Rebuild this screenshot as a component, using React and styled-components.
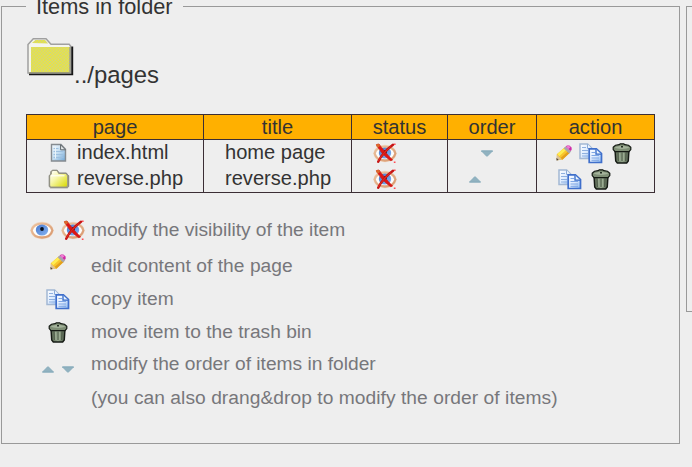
import React from "react";
import styled, { createGlobalStyle } from "styled-components";

const GlobalStyle = createGlobalStyle`
  * { box-sizing: border-box; }
  body {
    margin: 0;
    background: #eeeeee;
    overflow: hidden;
    color: #333333;
    font-family: "Liberation Sans", Arial, sans-serif;
  }
`;

const Page = styled.main`
  display: flex;
  align-items: flex-start;
  gap: 6px;
  width: 692px;
  height: 467px;
  padding-left: 1px;
  overflow: hidden;
`;

const Panel = styled.fieldset`
  flex: none;
  width: 679px;
  height: 450px;
  margin: -6px 0 0;
  padding: 0 24px;
  border: 1px solid #999999;
`;

const Legend = styled.legend`
  height: 25px;
  padding: 0 10px;
  font-size: 21.75px;
  line-height: 25px;
  white-space: nowrap;
`;

const SidePanel = styled.aside`
  flex: none;
  width: 60px;
  height: 306px;
  margin-top: 6px;
  border: 1px solid #999999;
`;

const Location = styled.div`
  display: flex;
  align-items: flex-start;
  height: 95px;
  padding-top: 18px;
`;

const Path = styled.span`
  margin-top: 24px;
  font-size: 23.9px;
  line-height: 28px;
`;

const ItemTable = styled.table`
  width: 629px;
  table-layout: fixed;
  border-collapse: separate;
  border-spacing: 0;
  border: 1px solid #3b2e35;
  border-right: 0;
  border-bottom: 0;
  font-size: 20.1px;
  line-height: 24px;
`;

const Col = styled.col`
  width: ${(p) => p.$width}px;
`;

const HeadCell = styled.th`
  height: 25px;
  padding: 0;
  border-right: 1px solid #3b2e35;
  border-bottom: 1px solid #3b2e35;
  background: #ffb000;
  font-weight: 400;
  text-align: center;
`;

const Cell = styled.td`
  height: ${(p) => (p.$last ? 27 : 26)}px;
  padding: 0 0 0 ${(p) => p.$indent || 0}px;
  border-right: 1px solid #3b2e35;
  border-bottom: ${(p) => (p.$last ? "1px solid #3b2e35" : "0")};
`;

const CellContent = styled.div`
  display: flex;
  align-items: center;
  gap: ${(p) => p.$gap || 0}px;
  height: 26px;
  white-space: nowrap;
`;

const CellText = styled.span`
  margin-top: -3px;
`;

const IconGroup = styled.span`
  display: flex;
  align-items: center;
  gap: 9px;
`;

const Help = styled.ul`
  margin: 21px 0 0;
  padding: 0;
  list-style: none;
  color: #77777b;
  font-size: 19.2px;
  line-height: 32px;
`;

const HelpRow = styled.li`
  display: flex;
  align-items: flex-start;
  height: ${(p) => p.$height}px;
  letter-spacing: ${(p) => p.$tracking || 0}px;
  white-space: nowrap;
`;

const HelpIcons = styled.span`
  display: flex;
  flex: none;
  align-items: center;
  justify-content: center;
  gap: ${(p) => p.$gap || 0}px;
  width: 65px;
  height: 32px;
  padding: ${(p) => p.$pad || "0"};
`;

const Svg = styled.svg`
  display: block;
  flex: none;
`;

const BigFolder = () => (
  <Svg width="48" height="40" viewBox="0 0 48 40">
    <defs>
      <pattern id="dither" width="3" height="3" patternUnits="userSpaceOnUse">
        <rect width="3" height="3" fill="#eaea38" />
        <rect width="1.5" height="1.5" fill="#d2d084" />
        <rect x="1.5" y="1.5" width="1.5" height="1.5" fill="#d2d084" />
      </pattern>
    </defs>
    <path d="M3 37h43V9.5" fill="none" stroke="#161616" strokeWidth="2.4" />
    <path d="M2 36V7.5L7.3 1.7h12.7l5 5.6h18.2L44.6 9v27H2z" fill="#f5f5ee" stroke="#a0a0a0" strokeWidth="1.5" />
    <path d="M6 6l3.4-3h9.7l3.1 3.5zM5 10h38.4v25H5z" fill="url(#dither)" />
    <path d="M3.4 35.6h40.4V10" fill="none" stroke="#9a9a70" />
  </Svg>
);

const PageIcon = () => (
  <Svg width="18" height="20" viewBox="0 0 18 20">
    <defs>
      <linearGradient id="sheet" x2="1" y2="1">
        <stop stopColor="#f4f9fd" />
        <stop offset=".5" stopColor="#c2ddf1" />
        <stop offset="1" stopColor="#71a6d5" />
      </linearGradient>
    </defs>
    <path d="M1.5 1.5h9.5l4.5 4.8v11.7h-14z" fill="url(#sheet)" stroke="#858b90" strokeWidth="1.4" />
    <path d="M10.6 1.8v5h4.8z" fill="#e6ebed" stroke="#62676b" />
    <path d="M3.5 5.5h5M3.5 8.5h10M3.5 11.5h10M3.5 14.5h10" stroke="#9dc0e0" />
    <path d="M5.5 3.5v12" stroke="#e9f4fa" />
  </Svg>
);

const FolderIcon = () => (
  <Svg width="22" height="20" viewBox="0 0 22 20">
    <defs>
      <linearGradient id="folder" x2="1" y2="1">
        <stop stopColor="#ffffff" />
        <stop offset=".4" stopColor="#f7f7ac" />
        <stop offset="1" stopColor="#d9da05" />
      </linearGradient>
    </defs>
    <path d="M1.2 17.5V6.5L2.8 5V2.7l1.5-1.5h4.9l2 2.8h7.2l1.2 1.8 1.1.8v11l-1.3 1.2H2.5z" fill="#a09e85" stroke="#85857a" />
    <path d="M2.2 6.8l1.7-1.7V2.8l1-.8h3.8l1.9 3h7.2l1.2 1.8v9.8l-.8.8H3l-.8-.9z" fill="url(#folder)" />
    <path d="M2.8 6.8h13.7" stroke="#fff" />
  </Svg>
);

const EyeIcon = ({ crossed }) => (
  <Svg width="24" height="21" viewBox="0 0 24 21">
    <defs>
      <linearGradient id="lid" y2="1">
        <stop stopColor="#ecc3a0" />
        <stop offset="1" stopColor="#d8986e" />
      </linearGradient>
      <linearGradient id="iris" y2="1">
        <stop stopColor="#4677cd" />
        <stop offset="1" stopColor="#86b4f3" />
      </linearGradient>
    </defs>
    <path d="M.5 10.5C1 5 6 1.8 12 1.8S23 5 23.5 10.5C23 16 18 19.2 12 19.2S1 16 .5 10.5z" fill="#f0dac8" />
    <path d="M1.6 10.5C2.9 6 7 3.7 12 3.7S21.1 6 22.4 10.5C21.1 15 17 17.5 12 17.5S2.9 15 1.6 10.5z" fill="#fdfdfc" stroke="url(#lid)" strokeWidth="2.3" />
    <ellipse cx="12" cy="10" rx="6.2" ry="5.5" fill="url(#iris)" />
    <circle cx="12" cy="9" r="1.9" fill="#08101e" />
    {crossed && (
      <>
        <path d="M3.4 1.6L6 1C9.2 5.5 14 11.5 19.6 17l-1.8.7C12.2 14 7.2 9 3.4 1.6z" fill="#df1515" stroke="#cb1a15" strokeWidth=".7" />
        <path d="M20 1.8C14.2 6 8.5 12 5.2 18.7" fill="none" stroke="#c41414" strokeWidth="2.5" strokeLinecap="round" />
        <path d="M18 3.4C13.2 7.4 8.6 12.5 5.4 17.8" fill="none" stroke="#ee3425" strokeWidth=".8" />
        <circle cx="5" cy="2.5" r="1.8" fill="#d9692c" />
        <path d="M21 .5h1.6v1.6H21zM20.8 18.5h1.7v1.6h-1.7z" fill="#ff4d55" />
      </>
    )}
  </Svg>
);

const DownIcon = () => (
  <Svg width="12" height="7" viewBox="0 0 12 7">
    <path d="M.2.5h11.6v.8L6.6 6.6H5.4L.2 1.3z" fill="#91b2c0" />
    <path d="M.5.5h11v1H.5z" fill="#84aaba" />
  </Svg>
);

const UpIcon = () => (
  <Svg width="12" height="7" viewBox="0 0 12 7">
    <path d="M.2 6.5h11.6v-.8L6.6.4H5.4L.2 5.7z" fill="#91b2c0" />
    <path d="M.5 5.5h11v1H.5z" fill="#84aaba" />
  </Svg>
);

const PencilIcon = () => (
  <Svg width="16" height="16" viewBox="0 0 16 16">
    <path d="M.8 9.3L8.5 2.4l5.3 5.3-7.4 7-5.6.5z" fill="#f8c52c" />
    <path d="M1.4 9L8.6 2.6l2 1.9-7.4 6.8z" fill="#ffed50" />
    <path d="M4.8 12.8l7.4-6.6 1.6 1.5-7.4 7z" fill="#e3a01c" />
    <path d="M.8 9.6l5 5-5 .6z" fill="#dbc29a" />
    <path d="M.5 12.7l2.2 2.2-2.2.5z" fill="#4a403b" />
    <path d="M7.6 3.2l2-1.8 5.5 5.2-2 2z" fill="#a8a5ac" />
    <path d="M9.6 1.4L11 .4h2.4l2.2 2.1v2.4l-1.1 1.2z" fill="#ce2ba6" />
    <path d="M10.2 1.6l1.4-.7h1.5l1.3 1.3-1.9 1.8z" fill="#f07fd5" />
  </Svg>
);

const CopyIcon = () => (
  <Svg width="24" height="21" viewBox="0 0 24 21">
    <defs>
      <linearGradient id="copySheet" x2="1" y2="1">
        <stop stopColor="#fff" />
        <stop offset=".55" stopColor="#dbeafe" />
        <stop offset="1" stopColor="#83b2ed" />
      </linearGradient>
    </defs>
    <path d="M1 1h7.6l4.3 4.3v10.3H1z" fill="url(#copySheet)" stroke="#a3b8d4" strokeWidth="1.5" />
    <path d="M8.5 1.2v4.2h4.2" fill="#eef6ff" stroke="#8cabd6" />
    <path d="M3 4.5h4M3 7.5h6M3 10.5h6M3 13h6" stroke="#8fb0df" />
    <path d="M10.2 5.9h7.2l5.1 4.8v8.8H10.2z" fill="url(#copySheet)" stroke="#3f6fcb" strokeWidth="1.7" />
    <path d="M17 6.2v4.9h5" fill="#e9f4ff" stroke="#3469c7" strokeWidth="1.3" />
    <path d="M12.5 9.5h3.5M12.5 12.5h7.5M12.5 15h7.5M12.5 17.3h7.5" stroke="#7ea6e4" />
  </Svg>
);

const TrashIcon = () => (
  <Svg width="20" height="21" viewBox="0 0 20 21">
    <defs>
      <linearGradient id="bin">
        <stop stopColor="#53604c" />
        <stop offset=".5" stopColor="#93a58b" />
        <stop offset="1" stopColor="#4b5846" />
      </linearGradient>
    </defs>
    <path d="M3 7h14l-.7 11-1.6 2H5.3l-1.6-2z" fill="url(#bin)" stroke="#151a14" strokeWidth="1.4" />
    <path d="M6 9.5l.4 8.5M10 9.5V18M14 9.5l-.4 8.5" stroke="#4d5a47" strokeWidth="1" />
    <path d="M7.7 9.5l.3 8.5M11.8 9.5V18" stroke="#a4b59b" />
    <path d="M1.2 4.3L3.5 2.2l3.7-.6 1-.8h3.6l1 .8 3.7.6 2.3 2.1v2.3L17 8.6H3l-1.8-2z" fill="#7e8e75" stroke="#151a14" strokeWidth="1.2" />
    <path d="M2.5 4.6c3-2.2 12-2.2 15 0-3 1.7-12 1.7-15 0z" fill="#a3b29a" />
    <path d="M9 3.7h2" fill="none" stroke="#242d22" strokeWidth="1.5" />
  </Svg>
);

export default function App() {
  return (
    <>
      <GlobalStyle />
      <Page>
        <Panel>
          <Legend>Items in folder</Legend>
          <Location>
            <BigFolder />
            <Path>../pages</Path>
          </Location>
          <ItemTable>
            <colgroup>
              {[177, 148, 96, 89, 118].map((width, i) => (
                <Col key={i} $width={width} />
              ))}
            </colgroup>
            <thead>
              <tr>
                {["page", "title", "status", "order", "action"].map((name) => (
                  <HeadCell key={name}>{name}</HeadCell>
                ))}
              </tr>
            </thead>
            <tbody>
              <tr>
                <Cell $indent={23}>
                  <CellContent $gap={9}><PageIcon /><CellText>index.html</CellText></CellContent>
                </Cell>
                <Cell $indent={21}><CellContent><CellText>home page</CellText></CellContent></Cell>
                <Cell $indent={21}><CellContent><EyeIcon crossed /></CellContent></Cell>
                <Cell $indent={33}><CellContent><DownIcon /></CellContent></Cell>
                <Cell $indent={19}>
                  <CellContent $gap={7}>
                    <PencilIcon />
                    <IconGroup><CopyIcon /><TrashIcon /></IconGroup>
                  </CellContent>
                </Cell>
              </tr>
              <tr>
                <Cell $last $indent={21}>
                  <CellContent $gap={7}><FolderIcon /><CellText>reverse.php</CellText></CellContent>
                </Cell>
                <Cell $last $indent={21}><CellContent><CellText>reverse.php</CellText></CellContent></Cell>
                <Cell $last $indent={21}><CellContent><EyeIcon crossed /></CellContent></Cell>
                <Cell $last $indent={21}><CellContent><UpIcon /></CellContent></Cell>
                <Cell $last $indent={21}>
                  <CellContent><IconGroup><CopyIcon /><TrashIcon /></IconGroup></CellContent>
                </Cell>
              </tr>
            </tbody>
          </ItemTable>
          <Help>
            <HelpRow $height={36} $tracking={-0.02}>
              <HelpIcons $gap={7} $pad="0 2px 0 0"><EyeIcon /><EyeIcon crossed /></HelpIcons>
              modify the visibility of the item
            </HelpRow>
            <HelpRow $height={33} $tracking={0.05}>
              <HelpIcons $pad="0 2px 8px 0"><PencilIcon /></HelpIcons>
              edit content of the page
            </HelpRow>
            <HelpRow $height={33} $tracking={0.08}>
              <HelpIcons $pad="0 1px 0 0"><CopyIcon /></HelpIcons>
              copy item
            </HelpRow>
            <HelpRow $height={32}>
              <HelpIcons $pad="1px 1px 0 0"><TrashIcon /></HelpIcons>
              move item to the trash bin
            </HelpRow>
            <HelpRow $height={34}>
              <HelpIcons $gap={8} $pad="10px 1px 0 0"><UpIcon /><DownIcon /></HelpIcons>
              modify the order of items in folder
            </HelpRow>
            <HelpRow $height={32} $tracking={0.05}>
              <HelpIcons />
              (you can also drang&amp;drop to modify the order of items)
            </HelpRow>
          </Help>
        </Panel>
        <SidePanel />
      </Page>
    </>
  );
}
